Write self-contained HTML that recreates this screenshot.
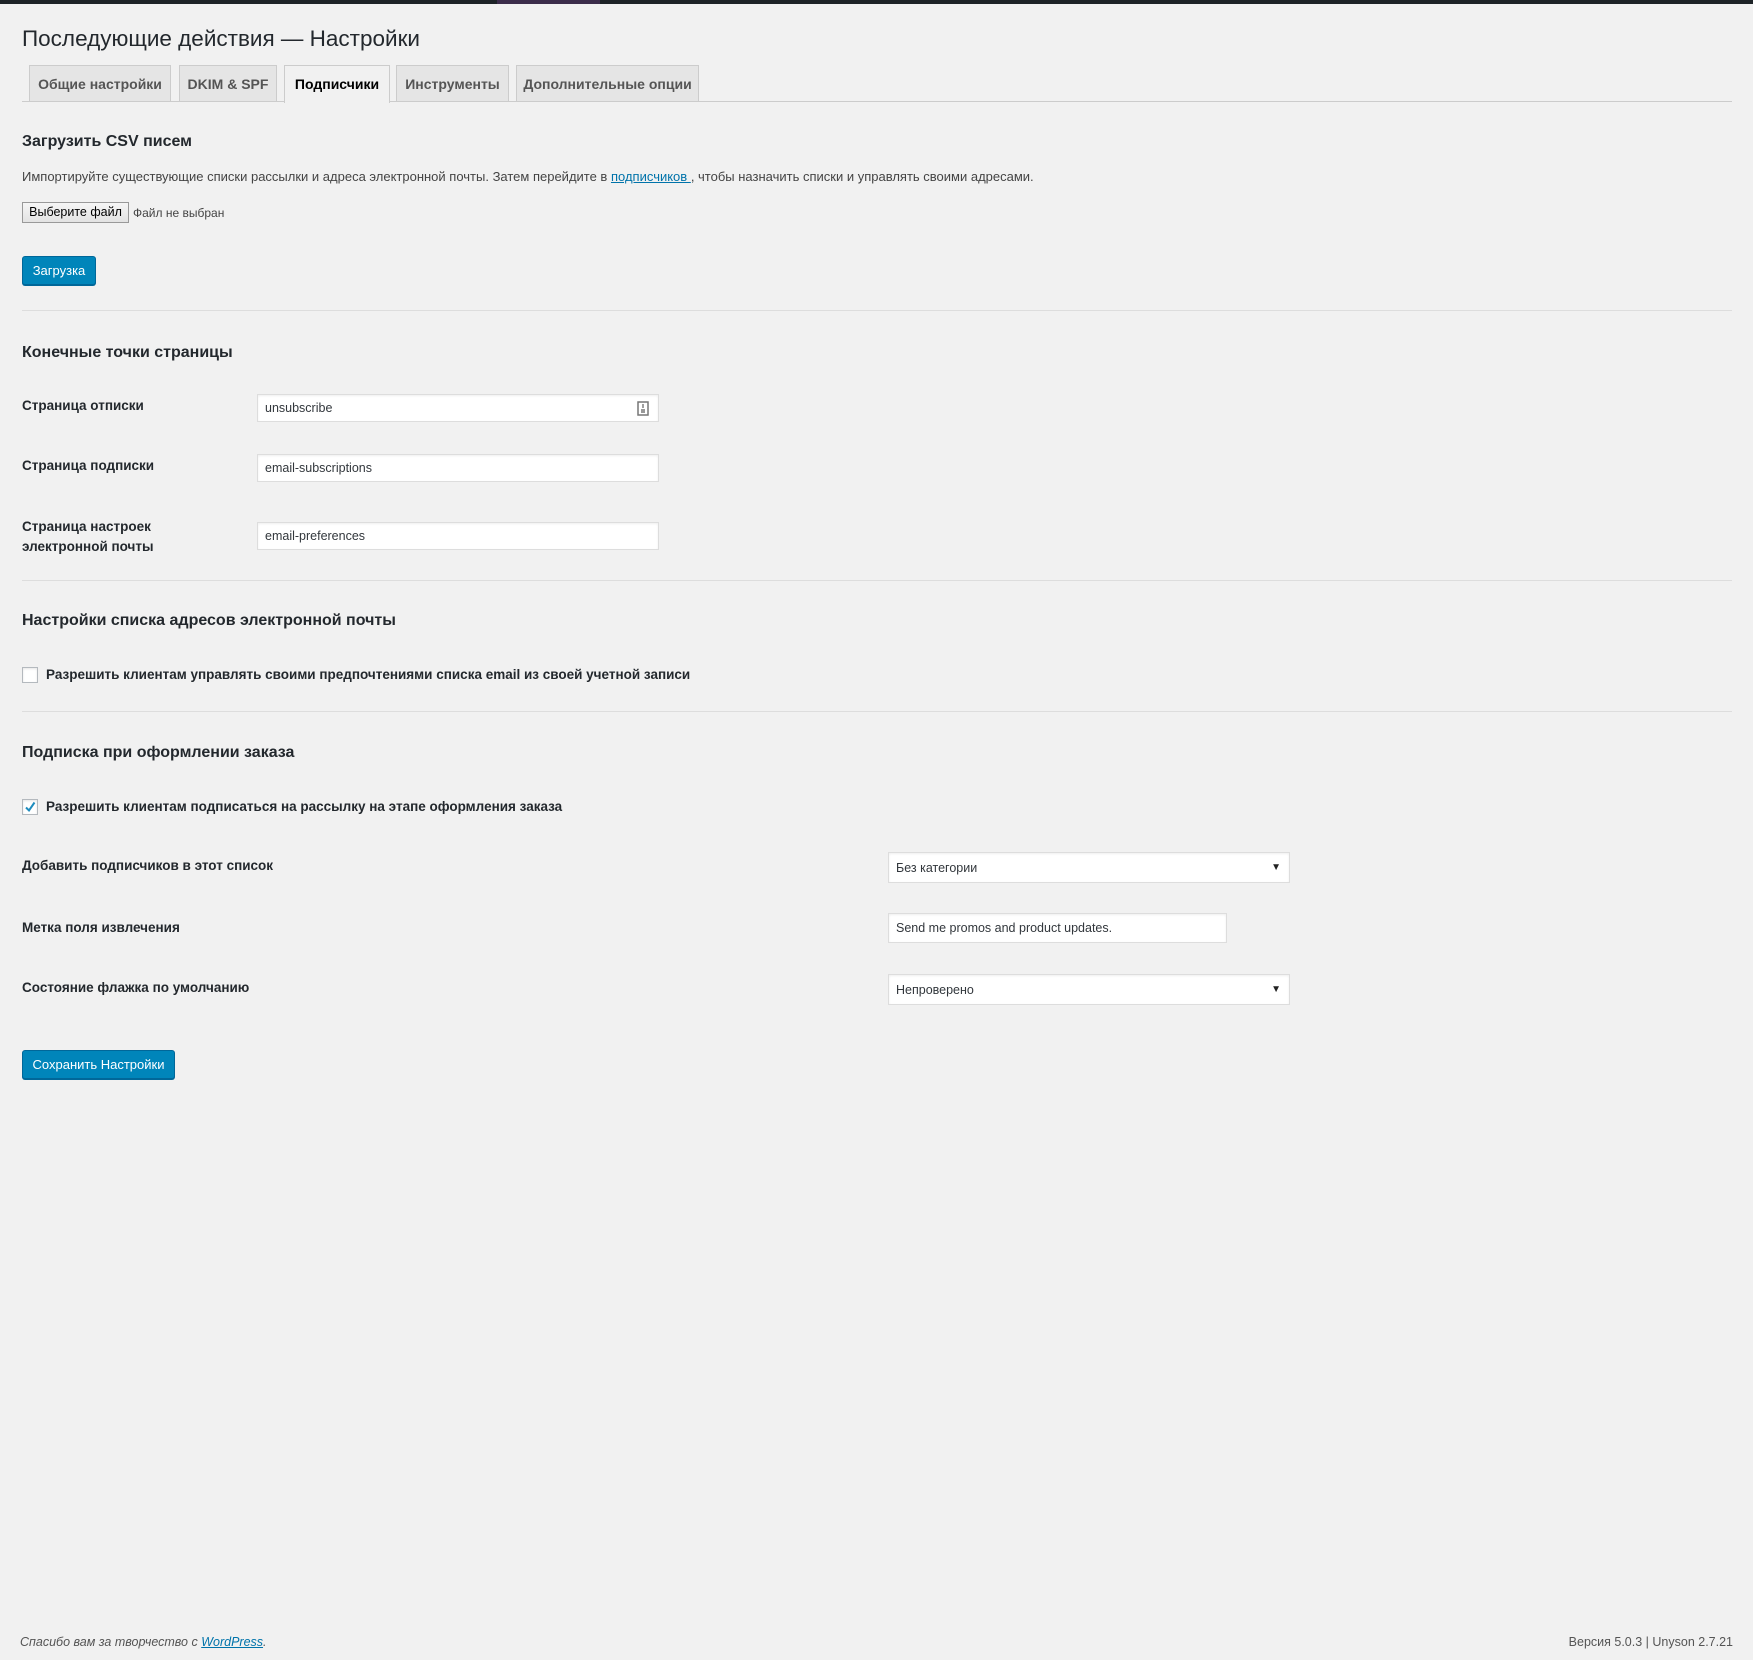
<!DOCTYPE html>
<html><head><meta charset="utf-8"><style>
*{box-sizing:border-box;margin:0;padding:0}
html,body{width:1753px;height:1660px;overflow:hidden;background:#f1f1f1;font-family:"Liberation Sans",sans-serif;color:#23282d}
.a{position:absolute;white-space:nowrap}
.top{position:absolute;left:0;top:0;width:1753px;height:4px;background:#1d2327}
.top i{position:absolute;left:497px;top:0;width:103px;height:4px;background:#3b2c4a}
.tab{position:absolute;top:65px;height:37px;border:1px solid #ccc;border-bottom:none;background:#e5e5e5;color:#555;font-size:14px;font-weight:bold;text-align:center;line-height:36px}
.tab.on{background:#f1f1f1;color:#000;height:38px;z-index:2}
.line{position:absolute;left:22px;width:1710px;height:1px;background:#ccc}
.h{font-size:16px;font-weight:bold;color:#23282d}
.lab{font-size:13.5px;font-weight:bold;color:#23282d}
.inp{position:absolute;background:#fff;border:1px solid #ddd;box-shadow:inset 0 1px 2px rgba(0,0,0,.07);font-size:12.5px;color:#32373c;padding-left:7px;display:flex;align-items:center}
.btn{position:absolute;background:#0085ba;border:1px solid #006799;border-radius:3px;color:#fff;font-size:13px;display:flex;align-items:center;justify-content:center;box-shadow:0 1px 0 #006799}
.cb{position:absolute;width:16px;height:16px;border:1px solid #b4b9be;background:#fff;box-shadow:inset 0 1px 2px rgba(0,0,0,.1)}
.arr{position:absolute;right:8px;font-size:10px;color:#222}
</style></head><body>
<div class="top"><i></i></div>
<div class="a" style="left:22px;top:26px;font-size:22.5px;color:#23282d">Последующие действия — Настройки</div>
<div class="tab" style="left:29px;width:142px">Общие настройки</div>
<div class="tab" style="left:179px;width:98px">DKIM &amp; SPF</div>
<div class="tab on" style="left:284px;width:106px">Подписчики</div>
<div class="tab" style="left:396px;width:113px">Инструменты</div>
<div class="tab" style="left:516px;width:183px">Дополнительные опции</div>
<div class="line" style="top:101px"></div>

<div class="a h" style="left:22px;top:133px">Загрузить CSV писем</div>
<div class="a" style="left:22px;top:169px;font-size:13px;color:#444">Импортируйте существующие списки рассылки и адреса электронной почты. Затем перейдите в <span style="color:#0073aa;text-decoration:underline">подписчиков </span>, чтобы назначить списки и управлять своими адресами.</div>
<div class="a" style="left:22px;top:202px;width:107px;height:21px;border:1px solid #999;background:linear-gradient(#f6f6f6,#e3e3e3);font-size:12.5px;color:#000;text-align:center;line-height:19px">Выберите файл</div>
<div class="a" style="left:133px;top:206px;font-size:12px;color:#444">Файл не выбран</div>
<div class="btn" style="left:22px;top:256px;width:74px;height:29px">Загрузка</div>
<div class="line" style="top:310px;background:#ddd"></div>

<div class="a h" style="left:22px;top:344px">Конечные точки страницы</div>
<div class="a lab" style="left:22px;top:398px">Страница отписки</div>
<div class="inp" style="left:257px;top:394px;width:402px;height:28px">unsubscribe
<svg style="position:absolute;right:9px;top:6px" width="12" height="15" viewBox="0 0 12 15"><rect x="1" y="1" width="10" height="13" fill="none" stroke="#777" stroke-width="1.5"/><rect x="4" y="8" width="4" height="4" fill="#999"/><rect x="5.3" y="3" width="1.4" height="4" fill="#777"/></svg></div>
<div class="a lab" style="left:22px;top:458px">Страница подписки</div>
<div class="inp" style="left:257px;top:454px;width:402px;height:28px">email-subscriptions</div>
<div class="a lab" style="left:22px;top:517px;line-height:20px">Страница настроек<br>электронной почты</div>
<div class="inp" style="left:257px;top:522px;width:402px;height:28px">email-preferences</div>
<div class="line" style="top:580px;background:#ddd"></div>

<div class="a h" style="left:22px;top:612px">Настройки списка адресов электронной почты</div>
<div class="cb" style="left:22px;top:667px"></div>
<div class="a lab" style="left:46px;top:667px">Разрешить клиентам управлять своими предпочтениями списка email из своей учетной записи</div>
<div class="line" style="top:711px;background:#ddd"></div>

<div class="a h" style="left:22px;top:744px">Подписка при оформлении заказа</div>
<div class="cb" style="left:22px;top:799px"><svg width="14" height="14" viewBox="0 0 14 14" style="position:absolute;left:0;top:0"><path d="M3 7.5 L6 10.5 L11.5 2.5" fill="none" stroke="#1e8cbe" stroke-width="2"/></svg></div>
<div class="a lab" style="left:46px;top:799px">Разрешить клиентам подписаться на рассылку на этапе оформления заказа</div>

<div class="a lab" style="left:22px;top:858px">Добавить подписчиков в этот список</div>
<div class="inp" style="left:888px;top:852px;width:402px;height:31px">Без категории<span class="arr">▼</span></div>
<div class="a lab" style="left:22px;top:920px">Метка поля извлечения</div>
<div class="inp" style="left:888px;top:913px;width:339px;height:30px">Send me promos and product updates.</div>
<div class="a lab" style="left:22px;top:980px">Состояние флажка по умолчанию</div>
<div class="inp" style="left:888px;top:974px;width:402px;height:31px">Непроверено<span class="arr">▼</span></div>

<div class="btn" style="left:22px;top:1050px;width:153px;height:29px">Сохранить Настройки</div>

<div class="a" style="left:20px;top:1635px;font-size:12.5px;font-style:italic;color:#555">Спасибо вам за творчество с <span style="color:#0073aa;text-decoration:underline">WordPress</span>.</div>
<div class="a" style="right:20px;top:1635px;font-size:12.5px;color:#555">Версия 5.0.3 | Unyson 2.7.21</div>
</body></html>
